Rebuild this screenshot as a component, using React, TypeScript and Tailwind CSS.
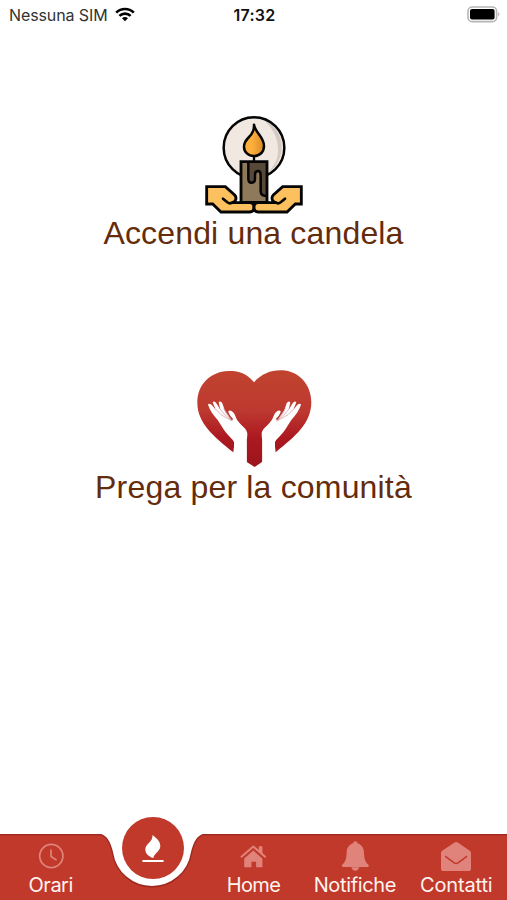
import type { ReactNode } from 'react';

function WifiIcon() {
  return (
    <svg className="h-[15px] w-[20px]" viewBox="0 0 20 15" fill="none" stroke="#000" strokeWidth="2.7">
      <path d="M1.2 5.6C6.2.8 13.8.8 18.8 5.6" />
      <path d="M4.4 8.9c3.2-3.1 8-3.1 11.2 0" />
      <path d="M7 11.2c1.8-1.6 4.2-1.6 6 0L10 14.2z" fill="#000" stroke="none" />
    </svg>
  );
}

function BatteryIcon() {
  return (
    <svg className="h-[17px] w-[33px]" viewBox="0 0 33 17">
      <rect x="1" y="1" width="28.6" height="14.6" rx="4.2" fill="#fff" stroke="#b5b5b5" strokeWidth="1.6" />
      <rect x="3" y="3" width="24.6" height="10.6" rx="2" fill="#000" />
      <path d="M31.2 6v4.6c1.7-.8 1.7-3.8 0-4.6z" fill="#b5b5b5" />
    </svg>
  );
}

function CandleHand() {
  return (
    <>
      <path d="M35 245H91L119 270C128 280 120 293 110 293H164C173 293 177 298 177 307S173 321 164 321H78L53 297H35z" fill="#fcc05f" stroke="#050505" strokeWidth="8.5" />
      <path d="M84 281l13 11c5 4 11 4 16 0" fill="none" stroke="#050505" strokeWidth="8" strokeLinecap="round" />
    </>
  );
}

function CandleIcon() {
  return (
    <svg className="h-[115px] w-[120px]" viewBox="0 0 360 345">
      <defs>
        <linearGradient id="flame" x1="0" y1="0" x2="1" y2="0">
          <stop offset=".4" stopColor="#fdae3b" />
          <stop offset="1" stopColor="#d88b2a" />
        </linearGradient>
      </defs>
      <circle cx="177" cy="128" r="91" fill="#f1e8e2" />
      <path d="M202 42a91 91 0 0 1 12 164c28-24 37-49 35-78-2-34-18-62-47-86z" fill="#d3cac4" />
      <circle cx="177" cy="128" r="91" fill="none" stroke="#050505" strokeWidth="7.500" />
      <path d="M177 150v20" stroke="#050505" strokeWidth="7" />
      <path d="M177 59c3 24 30 36 30 64 0 18-13 30-30 30s-30-12-30-28c0-13 7-21 15-29 10-10 16-21 15-37z" fill="url(#flame)" stroke="#050505" strokeWidth="7.500" strokeLinejoin="round" />
      <path d="M138 170h78v122h-78z" fill="#8f795b" />
      <path d="M159 170h57v103c-13 2-19-5-19-15v-50c0-15-17-15-17 0v13c0 15-21 15-21 0z" fill="#574838" />
      <path d="M160 172v49c0 16 20 16 20 0v-11c0-16 17-16 17 0v48c0 10 5 15 17 15" fill="none" stroke="#050505" strokeWidth="7.500" />
      <path d="M138 170h78v122h-78z" fill="none" stroke="#050505" strokeWidth="8.500" />
      <CandleHand />
      <g transform="matrix(-1 0 0 1 354 0)">
        <CandleHand />
      </g>
    </svg>
  );
}

function Hand() {
  return (
    <>
      <path
        d="M147 290V246C143 237 131 228 121 215C113 205 106 191 98 180C86 166 75 152 69 134C71 129 77 131 83 138L92 149L83 127C86 122 92 125 96 133L106 149L101 128C103 122 110 124 113 133L119 150L139 180L145 178C139 171 130 162 130 154C133 149 141 151 147 160C153 170 153 178 163 188C176 202 187 209 187 222C187 232 185 239 185 248V335H147z"
        fill="#fff"
      />
      <path d="M90 146l18 18 31 18M103 144l14 18 24 20M116 145l7 14 20 25" fill="none" stroke="#c98a8e" strokeWidth="1.8" />
    </>
  );
}

function HeartIcon() {
  return (
    <svg className="h-[115px] w-[140px]" viewBox="0 0 420 345">
      <defs>
        <linearGradient id="heart" x1="0" y1="0" x2="0" y2="1">
          <stop offset="0" stopColor="#c0432f" />
          <stop offset=".42" stopColor="#bd3930" />
          <stop offset=".7" stopColor="#ac1820" />
          <stop offset="1" stopColor="#9c151c" />
        </linearGradient>
      </defs>
      <path
        d="M207 67C184 38 157 32 130 33 76 35 37 73 37 128c0 61 49 101 108 149l39 28 25 16 23-16 40-28c58-47 107-87 107-150 0-54-38-94-88-96-33-1-61 10-84 36z"
        fill="url(#heart)"
      />
      {/* wrists cut through the lower edge of the heart */}
      <path d="M145 277l4-35h36v90h-40zM272 277l-4-35h-36v90h40z" fill="#fff" />
      <Hand />
      <g transform="matrix(-1 0 0 1 417 0)">
        <Hand />
      </g>
    </svg>
  );
}

function ClockIcon() {
  return (
    <svg className="h-[30px] w-[30px]" viewBox="0 0 30 30" fill="none" stroke="#e0837b" strokeWidth="1.7" strokeLinecap="round">
      <circle cx="15.3" cy="15" r="11.6" />
      <path d="M15 9v6.500l5 3.200" />
    </svg>
  );
}

function HomeIcon() {
  return (
    <svg className="h-[30px] w-[30px]" viewBox="0 0 30 30" fill="#e0837b">
      <path d="M6.200 17.400 15.300 9.600l9.100 7.800v8.800h-6.300v-5.400h-4.700v5.400H6.200z" />
      <path d="M20.800 5.300h3.600v8.400l-3.600-3z" />
      <path d="M4.600 17.200 15.300 7.900 26 17.200" fill="none" stroke="#c1392b" strokeWidth="1.100" />
      <path d="M3.500 15.700 15.300 5.500 27.100 15.700" fill="none" stroke="#e0837b" strokeWidth="2" strokeLinecap="round" />
    </svg>
  );
}

function BellIcon() {
  return (
    <svg className="h-[30px] w-[30px]" viewBox="0 0 30 30" fill="#e0837b">
      <path d="M13.200 2.300c0-2.700 4.200-2.700 4.200 0 4 1.200 6.300 4.400 6.500 8.500.3 6.600 1 9.800 4.300 12.800.9.900.7 2.300-.7 2.500h-8.300c-.4 4.900-7.400 4.900-7.800 0H3.100c-1.400-.2-1.600-1.600-.7-2.500 3.300-3 4-6.200 4.300-12.800.2-4.100 2.500-7.300 6.500-8.500z" />
      <path d="M11.800 26.400h7" stroke="#d26a60" strokeWidth=".7" />
    </svg>
  );
}

function MailIcon() {
  return (
    <svg className="h-[30px] w-[30px]" viewBox="0 0 30 30">
      <path d="M1.200 9.800 13.600 1.500c1-.7 2.200-.7 3.200 0L28.800 9.800c.8.600 1.200 1.300 1.200 2.300v15.500c0 1.700-1 2.700-2.700 2.700H2.700C1 30.300 0 29.300 0 27.600V12.100c0-1 .4-1.700 1.200-2.300z" fill="#e0837b" />
      <path d="m4.700 15.600 8.500 6.200c1.300.9 2.500.9 3.800 0l8.500-6.200" fill="none" stroke="#c1392b" strokeWidth="1.500" strokeLinecap="round" />
    </svg>
  );
}

function CandleTabIcon() {
  return (
    <svg className="h-[62px] w-[62px]" viewBox="0 0 62 62">
      <path d="M30.500 18C34.500 21.500 38.700 24.300 38.300 29.500C37.900 34.200 32.500 36.200 31.300 41C26.500 39.200 23.400 36.800 23.300 32.400C23.300 26.500 31 25.500 30.500 18z" fill="#fff" />
      <path d="M21.200 44h19.600" stroke="#fff" strokeWidth="2.100" strokeLinecap="round" />
    </svg>
  );
}

type TabProps = { label: string; labelClass: string; children: ReactNode };

function Tab({ label, labelClass, children }: TabProps) {
  return (
    <button className="flex h-full flex-col items-center pt-[31px]">
      {children}
      <span className={`mt-[1px] whitespace-nowrap text-[20px] leading-[26px] text-[#fff3ef] ${labelClass}`}>{label}</span>
    </button>
  );
}

function TabBar() {
  return (
    <nav className="relative h-[90px] w-full font-['Inter',sans-serif]">
      {/* bar with the notch around the active tab */}
      <svg className="absolute inset-0 h-[90px] w-[507px]" viewBox="0 0 507 90">
        <path d="M0 24H100C107 25 110.500 34 112.500 43A40 40 0 0 0 191.500 43C193.500 34 197 25 204 24H507V90H0z" fill="#c1392b" />
        <path d="M0 24.600H100C107 25.500 110.500 34 112.500 43A40 40 0 0 0 191.500 43C193.500 34 197 25.500 204 24.600H507" fill="none" stroke="#9d271d" strokeWidth="1.400" />
      </svg>
      <div className="relative grid h-full grid-cols-5">
        <Tab label="Orari" labelClass="tracking-[-0.5px]"><ClockIcon /></Tab>
        <div className="flex justify-center pt-[7px] pl-px">
          <button className="h-[62px] w-[62px] rounded-full bg-[#c1392b]">
            <CandleTabIcon />
          </button>
        </div>
        <Tab label="Home" labelClass="tracking-[-0.6px]"><HomeIcon /></Tab>
        <Tab label="Notifiche" labelClass="tracking-[-0.35px]"><BellIcon /></Tab>
        <Tab label="Contatti" labelClass="tracking-[-0.15px]"><MailIcon /></Tab>
      </div>
    </nav>
  );
}

export default function App() {
  return (
    <div className="flex h-[900px] w-[507px] flex-col overflow-hidden bg-white">
      <header className="grid h-[29px] grid-cols-3 items-center pr-[7px] pl-[9px] font-['Inter',sans-serif] text-[#333]">
        <div className="flex items-center gap-[7px]">
          <span className="whitespace-nowrap text-[16px] tracking-[-0.1px]">Nessuna SIM</span>
          <WifiIcon />
        </div>
        <span className="text-center text-[16px] font-semibold tracking-[0.3px] text-[#111]">17:32</span>
        <div className="flex justify-end">
          <BatteryIcon />
        </div>
      </header>

      <main className="flex flex-1 flex-col items-center pt-[76px] font-['Liberation_Sans',Arial,sans-serif] text-[32px] leading-[36px] text-[#642c0b]">
        <button className="flex flex-col items-center">
          <span className="pl-[3px]">
            <CandleIcon />
          </span>
          <span className="-mt-[5px] whitespace-nowrap tracking-[0.16px]">Accendi una candela</span>
        </button>
        <button className="mt-[109px] flex flex-col items-center">
          <span className="pl-[2px]">
            <HeartIcon />
          </span>
          <span className="-mt-[6px] whitespace-nowrap tracking-[0.18px]">Prega per la comunità</span>
        </button>
      </main>

      <TabBar />
    </div>
  );
}
